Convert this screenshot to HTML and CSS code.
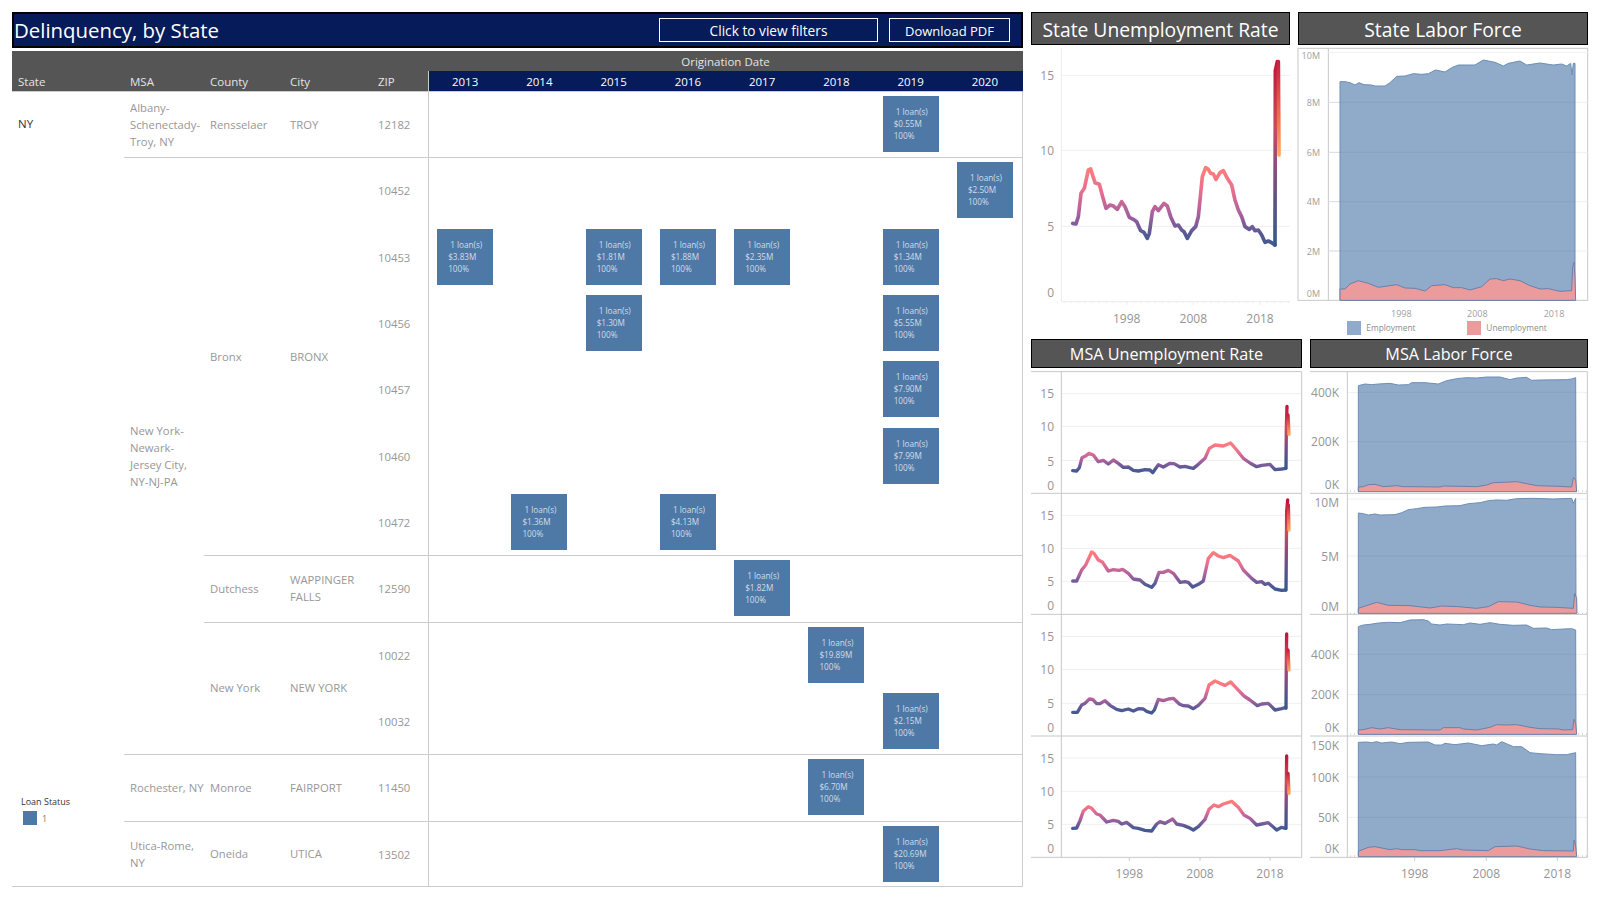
FILE: index.html
```html
<!DOCTYPE html>
<html lang="en">
<head>
    <meta charset="UTF-8">
    <title>Delinquency, by State</title>
    <link rel="stylesheet" href="styles.css">
</head>
<body>
<svg class="defs" width="0" height="0">
    <defs>
        <linearGradient id="rate" x1="0" y1="0" x2="0" y2="1">
            <stop offset="0" stop-color="#ff7d7a"/>
            <stop offset="0.3" stop-color="#e8708f"/>
            <stop offset="0.6" stop-color="#a8609e"/>
            <stop offset="0.85" stop-color="#585a96"/>
            <stop offset="1" stop-color="#3f5a90"/>
        </linearGradient>
        <linearGradient id="spike" x1="0" y1="0" x2="0" y2="1">
            <stop offset="0" stop-color="#c0143c"/>
            <stop offset="0.35" stop-color="#cf4a58"/>
            <stop offset="0.55" stop-color="#96497c"/>
            <stop offset="0.75" stop-color="#5f5288"/>
            <stop offset="1" stop-color="#335a8c"/>
        </linearGradient>
        <linearGradient id="drop" x1="0" y1="0" x2="0" y2="1">
            <stop offset="0" stop-color="#c81f40"/>
            <stop offset="0.5" stop-color="#e8644f"/>
            <stop offset="1" stop-color="#ffa85f"/>
        </linearGradient>
    </defs>
</svg>

<div class="page">
    <div class="report">
        <div class="title-bar">
            <div class="title">Delinquency, by State</div>
            <div class="btn btn-filters">Click to view filters</div>
            <div class="btn btn-pdf">Download PDF</div>
        </div>

        <div class="thead">
            <div class="thead-top">Origination Date</div>
            <div class="thead-row">
                <div class="c-state">State</div>
                <div class="c-msa">MSA</div>
                <div class="c-county">County</div>
                <div class="c-city">City</div>
                <div class="c-zip">ZIP</div>
                <div class="year-heads">
                    <div>2013</div><div>2014</div><div>2015</div><div>2016</div>
                    <div>2017</div><div>2018</div><div>2019</div><div>2020</div>
                </div>
            </div>
        </div>

        <div class="tbody">
            <div class="state-col">
                <div class="state-name">NY</div>
                <div class="legend">
                    <div class="legend-title">Loan Status</div>
                    <div class="legend-item"><span class="swatch"></span>1</div>
                </div>
            </div>
            <div class="msas">
                <div class="msa">
                    <div class="c-msa cell">Albany-<br>Schenectady-<br>Troy, NY</div>
                    <div class="counties">
                        <div class="county">
                            <div class="c-county cell">Rensselaer</div>
                            <div class="c-city cell">TROY</div>
                            <div class="zips">
                                <div class="zip-row">
                                    <div class="c-zip cell">12182</div>
                                    <div class="years">
                                        <div class="loan y2019"><span>1 loan(s)</span>$0.55M<br>100%</div>
                                    </div>
                                </div>
                            </div>
                        </div>
                    </div>
                </div>

                <div class="msa">
                    <div class="c-msa cell">New York-<br>Newark-<br>Jersey City,<br>NY-NJ-PA</div>
                    <div class="counties">
                        <div class="county">
                            <div class="c-county cell">Bronx</div>
                            <div class="c-city cell">BRONX</div>
                            <div class="zips">
                                <div class="zip-row">
                                    <div class="c-zip cell">10452</div>
                                    <div class="years">
                                        <div class="loan y2020"><span>1 loan(s)</span>$2.50M<br>100%</div>
                                    </div>
                                </div>
                                <div class="zip-row">
                                    <div class="c-zip cell">10453</div>
                                    <div class="years">
                                        <div class="loan y2013"><span>1 loan(s)</span>$3.83M<br>100%</div>
                                        <div class="loan y2015"><span>1 loan(s)</span>$1.81M<br>100%</div>
                                        <div class="loan y2016"><span>1 loan(s)</span>$1.88M<br>100%</div>
                                        <div class="loan y2017"><span>1 loan(s)</span>$2.35M<br>100%</div>
                                        <div class="loan y2019"><span>1 loan(s)</span>$1.34M<br>100%</div>
                                    </div>
                                </div>
                                <div class="zip-row">
                                    <div class="c-zip cell">10456</div>
                                    <div class="years">
                                        <div class="loan y2015"><span>1 loan(s)</span>$1.30M<br>100%</div>
                                        <div class="loan y2019"><span>1 loan(s)</span>$5.55M<br>100%</div>
                                    </div>
                                </div>
                                <div class="zip-row">
                                    <div class="c-zip cell">10457</div>
                                    <div class="years">
                                        <div class="loan y2019"><span>1 loan(s)</span>$7.90M<br>100%</div>
                                    </div>
                                </div>
                                <div class="zip-row">
                                    <div class="c-zip cell">10460</div>
                                    <div class="years">
                                        <div class="loan y2019"><span>1 loan(s)</span>$7.99M<br>100%</div>
                                    </div>
                                </div>
                                <div class="zip-row">
                                    <div class="c-zip cell">10472</div>
                                    <div class="years">
                                        <div class="loan y2014"><span>1 loan(s)</span>$1.36M<br>100%</div>
                                        <div class="loan y2016"><span>1 loan(s)</span>$4.13M<br>100%</div>
                                    </div>
                                </div>
                            </div>
                        </div>
                        <div class="county">
                            <div class="c-county cell">Dutchess</div>
                            <div class="c-city cell">WAPPINGER<br>FALLS</div>
                            <div class="zips">
                                <div class="zip-row">
                                    <div class="c-zip cell">12590</div>
                                    <div class="years">
                                        <div class="loan y2017"><span>1 loan(s)</span>$1.82M<br>100%</div>
                                    </div>
                                </div>
                            </div>
                        </div>
                        <div class="county">
                            <div class="c-county cell">New York</div>
                            <div class="c-city cell">NEW YORK</div>
                            <div class="zips">
                                <div class="zip-row">
                                    <div class="c-zip cell">10022</div>
                                    <div class="years">
                                        <div class="loan y2018"><span>1 loan(s)</span>$19.89M<br>100%</div>
                                    </div>
                                </div>
                                <div class="zip-row">
                                    <div class="c-zip cell">10032</div>
                                    <div class="years">
                                        <div class="loan y2019"><span>1 loan(s)</span>$2.15M<br>100%</div>
                                    </div>
                                </div>
                            </div>
                        </div>
                    </div>
                </div>

                <div class="msa">
                    <div class="c-msa cell">Rochester, NY</div>
                    <div class="counties">
                        <div class="county">
                            <div class="c-county cell">Monroe</div>
                            <div class="c-city cell">FAIRPORT</div>
                            <div class="zips">
                                <div class="zip-row">
                                    <div class="c-zip cell">11450</div>
                                    <div class="years">
                                        <div class="loan y2018"><span>1 loan(s)</span>$6.70M<br>100%</div>
                                    </div>
                                </div>
                            </div>
                        </div>
                    </div>
                </div>

                <div class="msa">
                    <div class="c-msa cell">Utica-Rome,<br>NY</div>
                    <div class="counties">
                        <div class="county">
                            <div class="c-county cell">Oneida</div>
                            <div class="c-city cell">UTICA</div>
                            <div class="zips">
                                <div class="zip-row">
                                    <div class="c-zip cell">13502</div>
                                    <div class="years">
                                        <div class="loan y2019"><span>1 loan(s)</span>$20.69M<br>100%</div>
                                    </div>
                                </div>
                            </div>
                        </div>
                    </div>
                </div>
            </div>
        </div>
    </div>

    <div class="side">
        <div class="side-row">
            <div class="panel panel-state-rate">
                <div class="panel-title big">State Unemployment Rate</div>
                <!-- chart viewBoxes are in 1/3 px units -->
                <svg class="chart" viewBox="33 138 777 873">
                    <path class="grid" d="M124 226H810M124 451H810M124 679H810"/>
                    <path class="axis-light" d="M124 145V905H810"/>
                    <path class="minor" d="M110 907H810"/>
                    <path class="axis-light" d="M320 905V915M520 905V915M720 905V915"/>
                    <text class="lbl end" x="102" y="241">15</text>
                    <text class="lbl end" x="102" y="466">10</text>
                    <text class="lbl end" x="102" y="694">5</text>
                    <text class="lbl end" x="102" y="892">0</text>
                    <text class="lbl mid" x="320" y="968">1998</text>
                    <text class="lbl mid" x="520" y="968">2008</text>
                    <text class="lbl mid" x="720" y="968">2018</text>
                    <polyline class="rate" points="158,670 168,672 175,650 183,580 193,565 205,510 212,507 225,548 238,553 248,590 258,625 270,615 280,618 292,628 305,605 315,620 328,652 340,658 350,665 362,692 372,697 382,715 388,700 397,635 405,620 415,632 432,610 442,618 452,650 465,678 475,675 485,690 492,695 502,715 515,692 527,680 535,650 547,530 557,503 565,508 572,520 580,522 588,538 600,518 610,512 622,535 635,555 645,600 655,630 665,650 675,680 688,688 697,680 705,692 715,690 725,705 735,727 745,723 755,728 765,735"/>
                    <polyline class="spike" points="765,735 766,212 772,185"/>
                    <polyline class="drop" points="775,185 777,465"/>
                </svg>
            </div>
            <div class="panel panel-state-labor">
                <div class="panel-title big">State Labor Force</div>
                <svg class="chart" viewBox="24 138 870 873">
                    <rect class="frame" x="24" y="145" width="869" height="756"/>
                    <path class="frame" d="M115 145V901"/>
                    <path class="grid" d="M115 158H893M115 307H893M115 457H893M115 605H893M115 753H893"/>
                    <polygon class="emp" points="150,245 165,245 180,248 195,255 207,248 222,254 245,255 255,258 285,258 300,248 320,229 345,228 370,221 395,223 415,221 437,210 465,216 485,203 505,195 555,195 580,180 600,184 615,187 640,198 655,190 690,183 710,195 750,189 790,195 815,192 830,198 842,190 846,225 850,190 855,190 855,901 150,901"/>
                    <polygon class="unemp" points="150,867 165,867 180,852 205,842 235,850 265,862 300,857 320,854 345,864 375,865 405,873 425,857 465,854 490,863 515,863 540,870 575,860 600,837 620,836 640,842 660,837 690,842 720,857 750,867 775,866 810,874 845,872 848,800 852,787 855,835 857,901 150,901"/>
                    <path class="grid-over" d="M115 307H855M115 457H855M115 605H855M115 753H855"/>
                    <text class="lbl-sm end" x="90" y="176">10M</text>
                    <text class="lbl-sm end" x="90" y="317">8M</text>
                    <text class="lbl-sm end" x="90" y="467">6M</text>
                    <text class="lbl-sm end" x="90" y="615">4M</text>
                    <text class="lbl-sm end" x="90" y="764">2M</text>
                    <text class="lbl-sm end" x="90" y="891">0M</text>
                    <text class="lbl-sm mid" x="334" y="950">1998</text>
                    <text class="lbl-sm mid" x="562" y="950">2008</text>
                    <text class="lbl-sm mid" x="792" y="950">2018</text>
                    <rect class="leg-emp" x="171" y="963" width="42" height="42"/>
                    <text class="lbl-leg" x="229" y="993">Employment</text>
                    <rect class="leg-unemp" x="531" y="963" width="42" height="42"/>
                    <text class="lbl-leg" x="589" y="993">Unemployment</text>
                </svg>
            </div>
        </div>

        <div class="side-row">
            <div class="panel panel-msa-rate">
                <div class="panel-title">MSA Unemployment Rate</div>
                <svg class="chart" viewBox="33 102 813 1533">
                    <path class="grid" d="M124 176H845M124 274H845M124 376H845M124 541H845M124 640H845M124 739H845M124 904H845M124 1003H845M124 1105H845M124 1269H845M124 1369H845M124 1468H845"/>
                    <path class="frame" d="M33 110H845M33 475H845M33 838H845M33 1203H845M33 1567H845M124 110V1567M845 110V1567"/>
                    <path class="minor" d="M124 1569H845"/>
                    <path class="frame" d="M328 1567V1577M540 1567V1577M750 1567V1577"/>
                    <text class="lbl end" x="102" y="190">15</text>
                    <text class="lbl end" x="102" y="288">10</text>
                    <text class="lbl end" x="102" y="392">5</text>
                    <text class="lbl end" x="102" y="464">0</text>
                    <text class="lbl end" x="102" y="555">15</text>
                    <text class="lbl end" x="102" y="654">10</text>
                    <text class="lbl end" x="102" y="753">5</text>
                    <text class="lbl end" x="102" y="826">0</text>
                    <text class="lbl end" x="102" y="918">15</text>
                    <text class="lbl end" x="102" y="1017">10</text>
                    <text class="lbl end" x="102" y="1119">5</text>
                    <text class="lbl end" x="102" y="1192">0</text>
                    <text class="lbl end" x="102" y="1283">15</text>
                    <text class="lbl end" x="102" y="1383">10</text>
                    <text class="lbl end" x="102" y="1482">5</text>
                    <text class="lbl end" x="102" y="1555">0</text>
                    <text class="lbl mid" x="328" y="1628">1998</text>
                    <text class="lbl mid" x="540" y="1628">2008</text>
                    <text class="lbl mid" x="750" y="1628">2018</text>
                    <polyline class="rate thin" points="158,407 170,408 178,398 186,368 198,362 207,355 220,360 235,380 250,376 265,387 280,375 295,385 310,397 325,396 340,406 355,408 375,404 390,405 398,413 415,389 430,396 450,385 462,386 480,396 495,394 510,398 520,400 535,388 555,370 568,340 585,330 610,333 632,324 650,345 670,370 690,384 710,395 725,391 750,388 765,404 785,402 797,400"/>
                    <polyline class="spike thin" points="798,400 799,280 801,214"/>
                    <polyline class="drop thin" points="804,240 807,298"/>
                    <polyline class="rate thin" points="158,738 170,738 185,705 197,690 215,651 222,655 235,675 248,682 265,708 280,704 297,706 308,703 325,715 340,732 360,735 375,748 395,757 405,745 417,712 430,712 445,706 460,715 480,742 495,740 505,742 518,756 535,748 550,738 565,670 580,653 595,663 610,668 630,661 655,678 670,705 695,730 710,742 725,740 735,748 745,745 765,762 785,766 797,765"/>
                    <polyline class="spike thin" points="798,765 800,530 803,495"/>
                    <polyline class="drop thin" points="805,510 807,585"/>
                    <g transform="translate(0,825)">
                        <polyline class="rate thin" points="158,307 172,307 185,285 195,280 208,267 218,268 230,281 240,281 255,272 270,286 290,298 305,302 325,297 340,303 355,296 370,297 380,304 395,309 403,300 415,268 430,272 445,267 460,265 478,282 490,287 505,288 520,296 535,286 555,265 567,225 585,213 600,220 615,226 632,216 650,235 672,258 690,270 712,287 725,282 745,280 765,300 785,296 797,292"/>
                        <polyline class="spike thin" points="798,295 799,150 800,72"/>
                        <polyline class="drop thin" points="804,120 807,180"/>
                        <polyline class="rate thin" points="158,655 170,654 180,632 190,603 205,590 215,595 230,612 240,615 260,636 280,631 295,634 305,642 320,637 340,653 355,655 375,661 395,663 410,642 420,635 435,640 458,627 470,642 490,646 505,652 520,660 535,650 555,628 567,598 582,585 595,590 610,582 635,574 655,592 672,615 690,625 710,645 725,642 745,638 770,660 785,652 797,655"/>
                        <polyline class="spike thin" points="798,655 799,520 800,438"/>
                        <polyline class="drop thin" points="804,490 807,550"/>
                    </g>
                </svg>
            </div>
            <div class="panel panel-msa-labor">
                <div class="panel-title">MSA Labor Force</div>
                <svg class="chart" viewBox="30 102 834 1533">
                    <path class="grid" d="M142 172H862M142 320H862M142 492H862M142 663H862M142 958H862M142 1079H862M142 1326H862M142 1447H862"/>
                    <path class="dots" d="M150 468H862M150 835H862M150 1197H862M150 1563H862"/>
                    <path class="frame" d="M30 110H862M30 475H862M30 838H862M30 1203H862M30 1567H862M142 110V1567M862 110V1567"/>
                    <path class="frame" d="M344 1567V1577M559 1567V1577M772 1567V1577"/>

                    <polygon class="emp" points="175,152 195,147 215,149 235,147 270,145 295,150 325,149 335,143 375,143 415,147 440,137 470,131 500,128 530,129 560,126 600,126 630,134 650,129 680,127 695,136 720,135 800,134 815,132 827,128 828,468 175,468"/>
                    <polygon class="unemp" points="175,456 190,455 205,449 225,448 250,455 290,452 310,455 335,455 420,456 430,453 530,455 560,450 580,443 610,442 650,440 680,446 710,452 780,454 815,456 820,428 827,434 830,470 175,470"/>
                    <polygon class="emp" points="175,534 190,536 205,540 225,537 240,540 285,539 305,533 325,524 350,521 375,517 410,516 435,513 480,512 505,506 540,503 565,497 590,495 620,496 650,491 700,490 760,492 815,490 820,505 827,490 828,833 175,833"/>
                    <polygon class="unemp" points="175,820 190,815 230,802 265,811 330,812 390,819 425,813 475,815 530,820 565,815 595,800 650,801 690,811 720,816 770,817 820,820 824,775 830,790 831,835 175,835"/>
                    <g transform="translate(0,825)">
                        <polygon class="emp" points="175,50 190,45 210,43 235,39 265,37 300,38 330,30 370,29 385,33 395,42 420,45 440,42 490,44 510,39 540,43 570,38 600,43 640,46 680,45 700,55 740,54 755,59 790,57 815,56 827,60 828,372 175,372"/>
                        <polygon class="unemp" points="175,360 190,359 215,353 240,357 265,353 300,359 420,360 430,353 480,353 490,357 530,360 570,352 590,344 620,345 650,344 690,352 720,356 775,357 790,360 818,359 822,328 827,340 830,373 175,373"/>
                        <polygon class="emp" points="175,397 200,396 215,398 230,395 245,399 275,396 300,401 325,397 385,396 405,405 425,405 435,400 465,404 505,399 545,407 580,402 590,405 605,395 640,410 665,410 690,428 720,431 770,434 800,434 827,428 828,738 175,738"/>
                        <polygon class="unemp" points="175,724 205,712 225,710 270,719 290,716 305,719 345,719 360,722 420,722 470,716 490,720 565,722 585,710 650,708 690,717 730,722 820,723 822,690 827,708 830,740 175,740"/>
                    </g>
                    <path class="grid-over" d="M175 172H828M175 320H828M175 663H828M175 958H828M175 1079H828M175 1326H828M175 1447H828"/>

                    <text class="lbl end" x="117" y="185">400K</text>
                    <text class="lbl end" x="117" y="333">200K</text>
                    <text class="lbl end" x="117" y="463">0K</text>
                    <text class="lbl end" x="117" y="517">10M</text>
                    <text class="lbl end" x="117" y="678">5M</text>
                    <text class="lbl end" x="117" y="827">0M</text>
                    <text class="lbl end" x="117" y="971">400K</text>
                    <text class="lbl end" x="117" y="1092">200K</text>
                    <text class="lbl end" x="117" y="1191">0K</text>
                    <text class="lbl end" x="117" y="1245">150K</text>
                    <text class="lbl end" x="117" y="1341">100K</text>
                    <text class="lbl end" x="117" y="1460">50K</text>
                    <text class="lbl end" x="117" y="1554">0K</text>
                    <text class="lbl mid" x="344" y="1628">1998</text>
                    <text class="lbl mid" x="559" y="1628">2008</text>
                    <text class="lbl mid" x="772" y="1628">2018</text>
                </svg>
            </div>
        </div>
    </div>
</div>
</body>
</html>
```

FILE: styles.css
```css
* {
    box-sizing: border-box;
}
body {
    margin: 0;
    height: 900px;
    overflow: hidden;
    background-color: #fff;
    font-family: "Open Sans", "Noto Sans", sans-serif;
    color: #979797;
}
.defs {
    position: absolute;
}
.page {
    display: flex;
    gap: 8px;
    padding: 12px 12px 0;
}

/* left report */
.report {
    width: 1011px;
}
.title-bar {
    display: flex;
    align-items: center;
    height: 36px;
    padding: 0 11px 0 0;
    border: 2px solid #000;
    background-color: #061b59;
    color: #fff;
}
.title {
    flex: 1;
    font-size: 20.4px;
}
.btn {
    height: 24px;
    line-height: 24px;
    border: 1px solid #fff;
    font-size: 13px;
    text-align: center;
}
.btn-filters {
    width: 219px;
    margin-right: 11px;
    font-size: 13.7px;
}
.btn-pdf {
    width: 121px;
}
.thead {
    height: 40px;
    margin-top: 3px;
    background-color: #555;
    box-shadow: 0 1px 0 #ccc;
    color: #e4e4e4;
    font-size: 11.5px;
}
.thead-top {
    height: 20px;
    line-height: 22px;
    padding-left: 416px;
    text-align: center;
}
.thead-row {
    display: flex;
    height: 20px;
    line-height: 21px;
}
.c-state {
    width: 112px;
    padding-left: 6px;
}
.c-msa {
    width: 80px;
    padding-left: 6px;
    white-space: nowrap;
}
.c-county {
    width: 80px;
    padding-left: 6px;
}
.c-city {
    width: 88px;
    padding-left: 6px;
}
.c-zip {
    width: 56px;
    padding-left: 6px;
}
.zip-row .c-zip {
    padding-top: 1px;
}
.year-heads {
    flex: 1;
    display: grid;
    grid-template-columns: repeat(8, 1fr);
    padding-right: 1px;
    box-shadow: inset 1px 0 0 #ccc;
    background-color: #061b59;
    color: #fff;
    text-align: center;
}
.tbody {
    display: flex;
    box-shadow: inset 0 -1px 0 #ccc;
    border-right: 1px solid #ccc;
    font-size: 11.3px;
    line-height: 17px;
}
.state-col {
    width: 112px;
    display: flex;
    flex-direction: column;
    padding: 24px 0 60px 6px;
    font-size: 11.5px;
}
.state-name {
    color: #333;
}
.legend {
    margin-top: auto;
    padding-left: 3px;
}
.legend-title {
    font-size: 9px;
    line-height: 14px;
    color: #333;
}
.legend-item {
    display: flex;
    align-items: center;
    gap: 5px;
    margin-top: 1px;
    font-size: 9px;
    color: #777;
}
.swatch {
    width: 14px;
    height: 14px;
    margin-left: 2px;
    background-color: #4e79a7;
}
.msas {
    flex: 1;
}
.msa {
    display: flex;
    box-shadow: 0 1px 0 #ccc;
}
.msa:last-child {
    box-shadow: none;
}
.counties {
    flex: 1;
}
.county {
    display: flex;
    box-shadow: 0 1px 0 #ccc;
}
.msa > .counties > .county:last-child {
    box-shadow: none;
}
.cell {
    display: flex;
    align-items: center;
}
.zips {
    flex: 1;
}
.zip-row {
    display: flex;
    height: 66.33px;
}
.years {
    flex: 1;
    display: grid;
    grid-template-columns: repeat(8, 1fr);
    align-items: center;
    justify-items: center;
    box-shadow: inset 1px 0 0 #ccc;
}
.loan {
    grid-row: 1;
    width: 56px;
    height: 56px;
    padding: 10px 0 0 11px;
    background-color: #4e79a7;
    color: #d3dce8;
    font-size: 8.2px;
    line-height: 12px;
}
.loan span {
    display: block;
    padding-left: 2px;
}
.y2013 { grid-column: 1; }
.y2014 { grid-column: 2; }
.y2015 { grid-column: 3; }
.y2016 { grid-column: 4; }
.y2017 { grid-column: 5; }
.y2018 { grid-column: 6; }
.y2019 { grid-column: 7; }
.y2020 { grid-column: 8; }

/* right charts */
.side {
    width: 557px;
}
.side-row {
    display: flex;
    gap: 8px;
}
.panel-state-rate {
    width: 259px;
    height: 327px;
}
.panel-state-labor {
    width: 290px;
    height: 327px;
}
.panel-msa-rate {
    width: 271px;
}
.panel-msa-labor {
    width: 278px;
}
.panel-title {
    height: 29px;
    line-height: 29px;
    border: 1px solid #000;
    background-color: #555;
    color: #fff;
    font-size: 16.2px;
    text-align: center;
}
.panel-title.big {
    height: 33px;
    line-height: 33px;
    font-size: 19.3px;
}
.chart {
    display: block;
    overflow: visible;
    margin-top: 1px;
}
.panel-state-rate .chart {
    width: 259px;
    height: 291px;
}
.panel-state-labor .chart {
    width: 290px;
    height: 291px;
}
.panel-msa-rate .chart {
    width: 271px;
    height: 511px;
}
.panel-msa-labor .chart {
    width: 278px;
    height: 511px;
}
.grid {
    fill: none;
    stroke: #f0f0f0;
    stroke-width: 3;
}
.grid-over {
    fill: none;
    stroke: #5f7fa5;
    stroke-opacity: 0.18;
    stroke-width: 3;
}
.frame {
    fill: none;
    stroke: #c8c8c8;
    stroke-width: 3;
}
.axis-light {
    fill: none;
    stroke: #ececec;
    stroke-width: 3;
}
.minor {
    fill: none;
    stroke: #e4e4e4;
    stroke-width: 3;
    stroke-dasharray: 3 18;
}
.dots {
    fill: none;
    stroke: #bbb;
    stroke-width: 3;
    stroke-dasharray: 3 9;
}
.lbl {
    font-size: 36px;
    fill: #959595;
}
.lbl-sm {
    font-size: 27px;
    fill: #a0a0a0;
}
.lbl-leg {
    font-size: 25px;
    fill: #8c8c8c;
}
.end {
    text-anchor: end;
}
.mid {
    text-anchor: middle;
}
.rate,
.spike,
.drop {
    fill: none;
    stroke-width: 11;
    stroke-linejoin: round;
    stroke-linecap: round;
}
.rate {
    stroke: url(#rate);
}
.spike {
    stroke: url(#spike);
}
.drop {
    stroke: url(#drop);
}
.thin {
    stroke-width: 10;
}
.emp {
    fill: #90aac9;
    stroke: #6c8eb6;
    stroke-width: 3;
}
.unemp {
    fill: #ec9b9c;
    stroke: #6c80aa;
    stroke-width: 3;
}
.leg-emp {
    fill: #90aac9;
}
.leg-unemp {
    fill: #ec9b9c;
}
```
